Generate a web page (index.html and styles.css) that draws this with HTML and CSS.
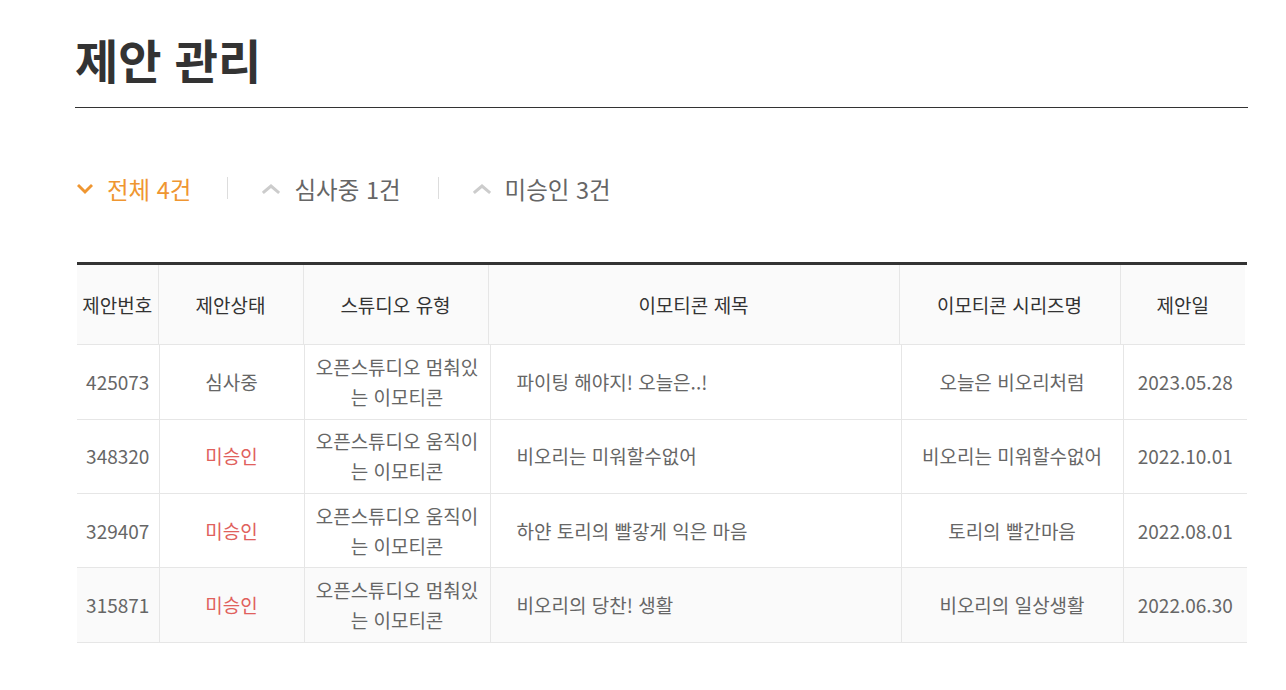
FILE: index.html
```html
<!DOCTYPE html>
<html lang="ko">
<head>
<meta charset="utf-8">
<title>제안 관리</title>
<link rel="stylesheet" href="styles.css">
</head>
<body>
<main class="page">
  <h1 class="page-title">제안 관리</h1>

  <ul class="tabs">
    <li class="tab tab-active">
      <svg class="chev" width="16" height="12" viewBox="0 0 16 12"><polyline points="2,3 8,9 14,3" fill="none" stroke="currentColor" stroke-width="3" stroke-linecap="square"/></svg>
      <span>전체 4건</span>
    </li>
    <li class="tab">
      <svg class="chev chev-up" width="18" height="12" viewBox="0 0 18 12"><polyline points="2,9 9,3 16,9" fill="none" stroke="currentColor" stroke-width="3" stroke-linecap="square"/></svg>
      <span>심사중 1건</span>
    </li>
    <li class="tab">
      <svg class="chev chev-up" width="18" height="12" viewBox="0 0 18 12"><polyline points="2,9 9,3 16,9" fill="none" stroke="currentColor" stroke-width="3" stroke-linecap="square"/></svg>
      <span>미승인 3건</span>
    </li>
  </ul>

  <div class="board">
    <table class="head-table">
      <colgroup>
        <col class="c1h"><col class="c2h"><col class="c3h"><col class="c4h"><col class="c5h"><col class="c6h">
      </colgroup>
      <thead>
        <tr>
          <th>제안번호</th>
          <th>제안상태</th>
          <th>스튜디오 유형</th>
          <th>이모티콘 제목</th>
          <th>이모티콘 시리즈명</th>
          <th>제안일</th>
        </tr>
      </thead>
    </table>
    <table class="body-table">
      <colgroup>
        <col class="c1"><col class="c2"><col class="c3"><col class="c4"><col class="c5"><col class="c6">
      </colgroup>
      <tbody>
        <tr>
          <td>425073</td>
          <td>심사중</td>
          <td class="studio">오픈스튜디오 멈춰있는 이모티콘</td>
          <td class="title">파이팅 해야지! 오늘은..!</td>
          <td>오늘은 비오리처럼</td>
          <td>2023.05.28</td>
        </tr>
        <tr>
          <td>348320</td>
          <td class="rejected">미승인</td>
          <td class="studio">오픈스튜디오 움직이는 이모티콘</td>
          <td class="title">비오리는 미워할수없어</td>
          <td>비오리는 미워할수없어</td>
          <td>2022.10.01</td>
        </tr>
        <tr>
          <td>329407</td>
          <td class="rejected">미승인</td>
          <td class="studio">오픈스튜디오 움직이는 이모티콘</td>
          <td class="title">하얀 토리의 빨갛게 익은 마음</td>
          <td>토리의 빨간마음</td>
          <td>2022.08.01</td>
        </tr>
        <tr class="hovered">
          <td>315871</td>
          <td class="rejected">미승인</td>
          <td class="studio">오픈스튜디오 멈춰있는 이모티콘</td>
          <td class="title">비오리의 당찬! 생활</td>
          <td>비오리의 일상생활</td>
          <td>2022.06.30</td>
        </tr>
      </tbody>
    </table>
  </div>
</main>
</body>
</html>
```

FILE: styles.css
```css
html, body {
  margin: 0;
  padding: 0;
  background: #fff;
}

body {
  font-family: "Noto Sans CJK KR", "Noto Sans", sans-serif;
  color: #333;
}

.page {
  width: 1173px;
  padding: 26px 0 40px 75px;
}

.page-title {
  margin: 0;
  font-size: 47px;
  font-weight: 700;
  line-height: 66px;
  color: #333;
  padding-bottom: 15px;
  border-bottom: 1px solid #333;
}

.tabs {
  list-style: none;
  margin: 66px 0 0 0;
  padding: 0 0 0 2px;
  display: flex;
  align-items: center;
}

.tab {
  display: flex;
  align-items: center;
  gap: 14px;
  font-size: 23.5px;
  line-height: 30px;
  color: #666;
  padding: 0 37px 0 35px;
  position: relative;
}

.tab + .tab::before {
  content: "";
  position: absolute;
  left: 0;
  top: 3px;
  width: 1px;
  height: 22px;
  background: #ddd;
}

.tab:first-child {
  padding-left: 0;
  padding-right: 36px;
}

.tab-active {
  color: #ef9631;
}

.chev {
  display: block;
  flex: none;
}

.chev-up {
  color: #ccc;
}

.board {
  margin: 58px 0 0 2px;
  width: 1170px;
  border-top: 3px solid #333;
}

table {
  border-collapse: collapse;
  table-layout: fixed;
}

.head-table {
  width: 1168px;
  background: #fafafa;
}

.c1h { width: 81px; }
.c2h { width: 145px; }
.c3h { width: 185px; }
.c4h { width: 411px; }
.c5h { width: 221px; }
.c6h { width: 125px; }

.head-table th {
  height: 79px;
  padding: 0;
  font-size: 19px;
  font-weight: 400;
  color: #333;
  text-align: center;
  border-right: 1px solid #e6e6e6;
  border-bottom: 1px solid #e6e6e6;
}

.head-table th:last-child {
  border-right: none;
}

.body-table {
  width: 1170px;
}

.c1 { width: 82px; }
.c2 { width: 145px; }
.c3 { width: 186px; }
.c4 { width: 411px; }
.c5 { width: 222px; }
.c6 { width: 124px; }

.body-table td {
  height: 74.3px;
  padding: 0 9px;
  font-size: 19px;
  line-height: 30px;
  color: #666;
  text-align: center;
  word-break: break-all;
  border-right: 1px solid #e6e6e6;
  border-bottom: 1px solid #e6e6e6;
  box-sizing: border-box;
}

.body-table td:first-child {
  padding: 0;
}

.body-table td:last-child {
  border-right: none;
  padding: 0;
}

.body-table td.title {
  text-align: left;
  padding-left: 26px;
}

.body-table td.rejected {
  color: #e0605c;
}

.body-table tr.hovered td {
  background: #fafafa;
}
```
